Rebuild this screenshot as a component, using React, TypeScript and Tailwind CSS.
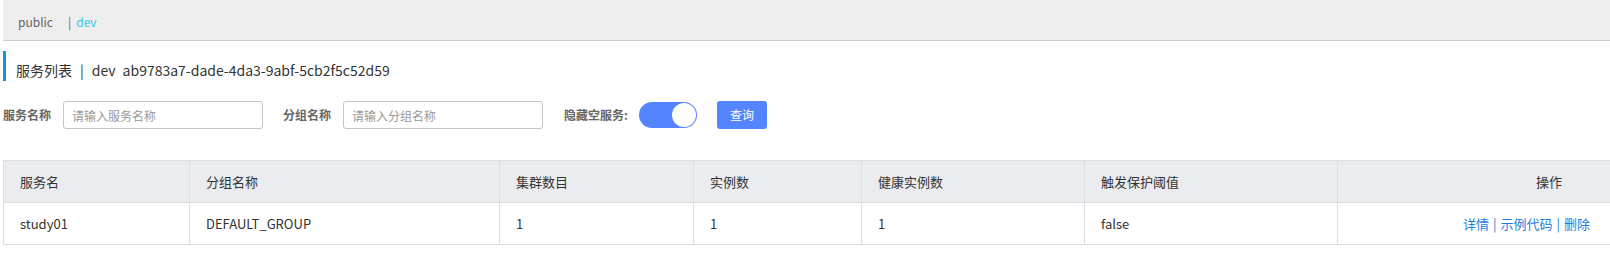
import React from 'react'

const font = { fontFamily: '"Noto Sans CJK SC", "Noto Sans", sans-serif' }

interface Column {
  title: string
  width: string
}

const columns: Column[] = [
  { title: '服务名', width: 'w-[186px]' },
  { title: '分组名称', width: 'w-[310px]' },
  { title: '集群数目', width: 'w-[194px]' },
  { title: '实例数', width: 'w-[168px]' },
  { title: '健康实例数', width: 'w-[223px]' },
  { title: '触发保护阈值', width: 'w-[253px]' },
]

const rows = [
  { name: 'study01', group: 'DEFAULT_GROUP', clusters: '1', instances: '1', healthy: '1', threshold: 'false' },
]

const SearchField: React.FC<{ label: string; placeholder: string }> = ({ label, placeholder }) => (
  <div className="flex items-center">
    <span className="text-[12px] font-bold text-[#666] mr-[12px]">{label}</span>
    <input
      className="w-[200px] h-[28px] border border-[#c4c6cf] rounded-[3px] px-[8px] text-[12px] placeholder:text-[#999] outline-none"
      placeholder={placeholder}
    />
  </div>
)

export default function App() {
  return (
    <div className="pl-[3px] bg-white text-[#333] overflow-hidden" style={font}>
      {/* namespace bar */}
      <div className="h-[41px] bg-[#eeeeee] border-b border-[#cccccc] flex items-center pt-[4px] pl-[15px] text-[12px]">
        <span className="text-[#666]">public</span>
        <span className="text-[#666] ml-[15px]">|</span>
        <span className="text-[#33cde5] ml-[5px]">dev</span>
      </div>

      {/* title */}
      <div className="mt-[10px] h-[30px] border-l-[3px] border-[#1297d2] flex items-center pt-[9px] pl-[10px] text-[14px] text-[#333]">
        <span>服务列表</span>
        <span className="mx-[8px]">|</span>
        <span>dev</span>
        <span className="ml-[7px]">ab9783a7-dade-4da3-9abf-5cb2f5c52d59</span>
      </div>

      {/* search form */}
      <div className="mt-[20px] flex items-center h-[28px]">
        <SearchField label="服务名称" placeholder="请输入服务名称" />
        <div className="ml-[20px]">
          <SearchField label="分组名称" placeholder="请输入分组名称" />
        </div>
        <span className="ml-[21px] text-[12px] font-bold text-[#666]">隐藏空服务:</span>
        <div className="ml-[11px] w-[58px] h-[26px] rounded-full bg-[#5584ff] flex items-center justify-end pr-[1px]">
          <div className="w-[24px] h-[24px] rounded-full bg-white" />
        </div>
        <button className="ml-[20px] w-[50px] h-[28px] rounded-[3px] bg-[#5584ff] text-white text-[12px]">
          查询
        </button>
      </div>

      {/* table */}
      <div className="mt-[31px] w-[1620px] border-t border-l border-b border-[#dcdee3] text-[13px]">
        <div className="flex h-[42px] bg-[#ebecf0] border-b border-[#dcdee3]">
          {columns.map((c) => (
            <div key={c.title} className={`${c.width} shrink-0 border-r border-[#dcdee3] flex items-center px-[16px]`}>
              {c.title}
            </div>
          ))}
          <div className="flex-1 flex items-center justify-end pr-[61px]">操作</div>
        </div>
        {rows.map((r) => (
          <div key={r.name} className="flex h-[41px] bg-white">
            {[r.name, r.group, r.clusters, r.instances, r.healthy, r.threshold].map((v, i) => (
              <div key={i} className={`${columns[i].width} shrink-0 border-r border-[#dcdee3] flex items-center px-[16px]`}>
                {v}
              </div>
            ))}
            <div className="flex-1 flex items-center justify-end pr-[33px] text-[#1f7cde]">
              <a>详情</a>
              <span className="mx-[4px]">|</span>
              <a>示例代码</a>
              <span className="mx-[4px]">|</span>
              <a>删除</a>
            </div>
          </div>
        ))}
      </div>
    </div>
  )
}
